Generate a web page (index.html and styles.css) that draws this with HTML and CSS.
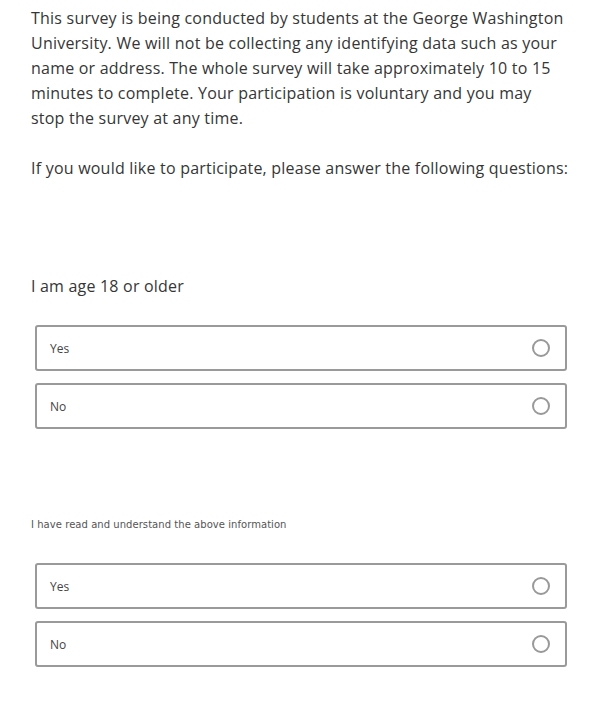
FILE: index.html
```html
<!DOCTYPE html>
<html>
<head>
<meta charset="utf-8">
<link rel="stylesheet" href="styles.css">
</head>
<body>
<div class="page">
  <p class="intro">This survey is being conducted by students at the George Washington University. We will not be collecting any identifying data such as your name or address. The whole survey will take approximately 10 to 15 minutes to complete. Your participation is voluntary and you may stop the survey at any time.</p>
  <p class="intro second">If you would like to participate, please answer the following questions:</p>

  <div class="question q1">
    <div class="qtext">I am age 18 or older</div>
    <div class="choices">
      <label class="choice"><span class="label">Yes</span><span class="radio"></span></label>
      <label class="choice"><span class="label">No</span><span class="radio"></span></label>
    </div>
  </div>

  <div class="question q2">
    <div class="qtext small">I have read and understand the above information</div>
    <div class="choices">
      <label class="choice"><span class="label">Yes</span><span class="radio"></span></label>
      <label class="choice"><span class="label">No</span><span class="radio"></span></label>
    </div>
  </div>
</div>
</body>
</html>
```

FILE: styles.css
```css
html, body {
  margin: 0;
  padding: 0;
  background: #fff;
}
.page {
  padding: 6px 20px 0 31px;
  width: 538px;
  font-family: "Open Sans", sans-serif;
  color: #363636;
}
.intro {
  margin: 0;
  font-size: 16px;
  line-height: 25px;
  letter-spacing: 0.22px;
}
.intro.second {
  margin-top: 25px;
}
.q1 {
  margin-top: 93px;
}
.q2 {
  margin-top: 89px;
}
.qtext {
  font-size: 16px;
  line-height: 25px;
  letter-spacing: 0.2px;
}
.qtext.small {
  font-family: "DejaVu Sans", Verdana, sans-serif;
  font-size: 10px;
  line-height: 14px;
  letter-spacing: 0.05px;
  color: #555;
}
.q1 .choices {
  margin-top: 26px;
}
.q2 .choices {
  margin-top: 31px;
}
.choices {
  display: flex;
  flex-direction: column;
  gap: 12px;
  padding: 0 2px 0 4px;
}
.choice {
  display: flex;
  align-items: center;
  justify-content: space-between;
  height: 42px;
  border: 2px solid #9a9a9a;
  border-radius: 3px;
  padding: 0 15px 0 13px;
}
.label {
  font-size: 12px;
  color: #444;
}
.radio {
  width: 14px;
  height: 14px;
  border: 2px solid #999;
  border-radius: 50%;
}
```
